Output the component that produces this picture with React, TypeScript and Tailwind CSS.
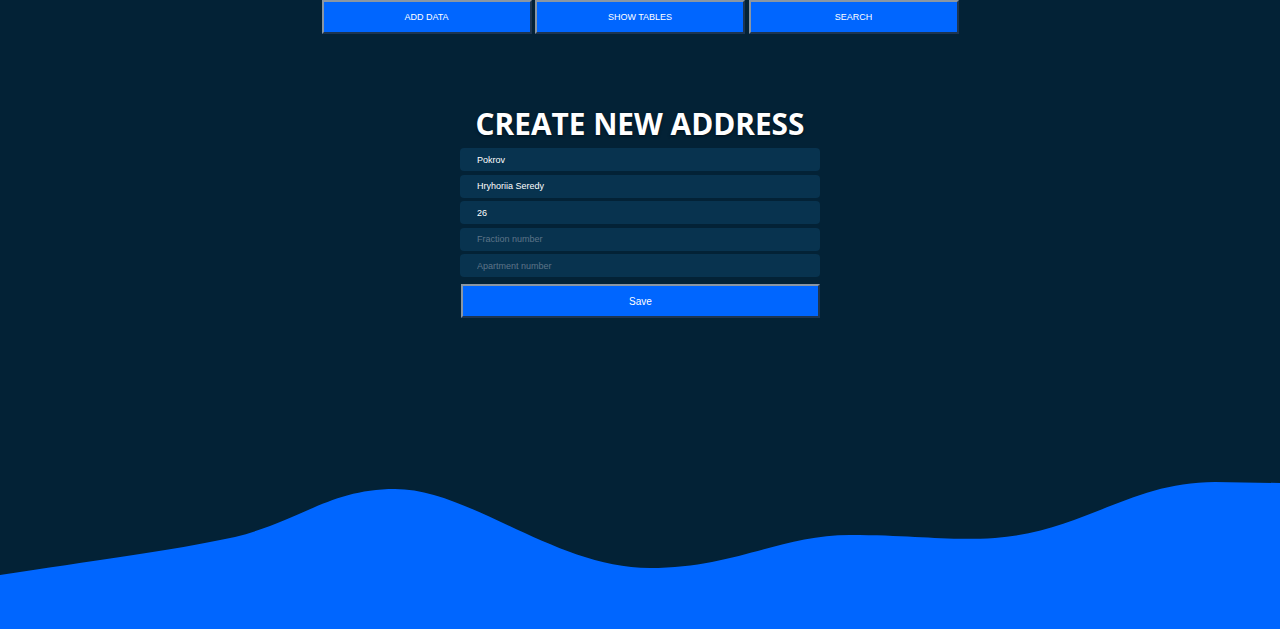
import React from "react";

const NavButton = ({ label }: { label: string }) => (
  <button className="w-[210px] h-[34px] pt-[2px] bg-[#0066ff] text-white text-[9px] border-2 border-t-[#8a96a3] border-l-[#8a96a3] border-b-[#1d3550] border-r-[#1d3550]">
    {label}
  </button>
);

const Field = ({ value, placeholder }: { value?: string; placeholder: string }) => (
  <input
    readOnly
    value={value ?? ""}
    placeholder={placeholder}
    className="w-[360px] h-[23px] rounded-[4px] bg-[#08334f] pl-[17px] text-[9px] text-white placeholder:text-[#5d7488] outline-none"
  />
);

const App = () => {
  return (
    <div className="flex h-screen flex-col overflow-hidden bg-[#032236] font-['Liberation_Sans',Arial,sans-serif]">
      {/* top nav */}
      <div className="flex justify-center gap-[3.5px]">
        <NavButton label="ADD DATA" />
        <NavButton label="SHOW TABLES" />
        <NavButton label="SEARCH" />
      </div>

      {/* form */}
      <div className="mt-[70px] flex flex-col items-center">
        <h1 className="font-['Open_Sans',sans-serif] text-[29.8px] font-bold leading-[40px] text-white [text-shadow:0_1px_3px_rgba(0,0,0,0.6)]">
          CREATE NEW ADDRESS
        </h1>
        <div className="mt-[4px] flex flex-col gap-[3.5px]">
          <Field value="Pokrov" placeholder="City" />
          <Field value="Hryhoriia Seredy" placeholder="Street" />
          <Field value="26" placeholder="House number" />
          <Field placeholder="Fraction number" />
          <Field placeholder="Apartment number" />
        </div>
        <button className="mt-[7px] ml-[1px] w-[359px] h-[34px] bg-[#0066ff] text-white text-[10px] border-2 border-t-[#8a96a3] border-l-[#8a96a3] border-b-[#1d3550] border-r-[#1d3550]">
          Save
        </button>
      </div>

      <div className="flex-1" />

      {/* wave */}
      <svg viewBox="0 0 1280 150" preserveAspectRatio="none" className="block h-[150px] w-full shrink-0">
        <path
          fill="#0066ff"
          d="M0,96 C90,82 170,72 235,58 C300,42 330,10 395,10 C470,10 555,89 650,89 C735,89 780,56 850,56 C915,56 945,62 995,59 C1085,52 1130,3 1215,3 L1280,4 L1280,150 L0,150 Z"
        />
      </svg>
    </div>
  );
};

export default App;
